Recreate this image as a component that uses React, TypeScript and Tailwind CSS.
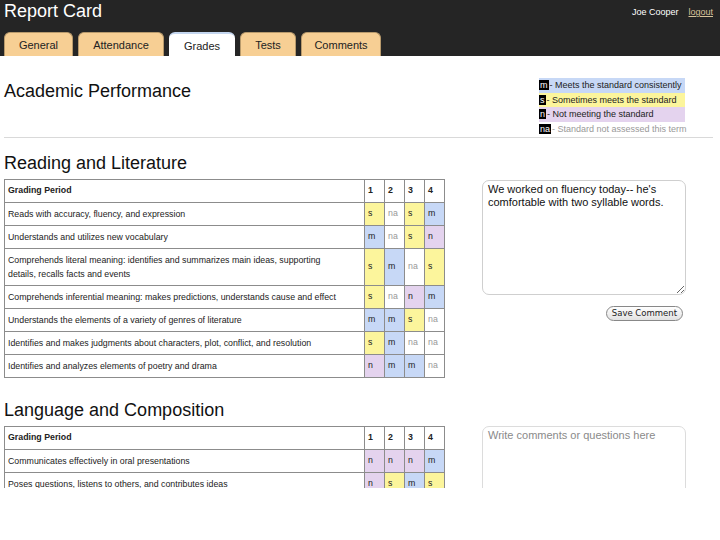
type Mark = 's' | 'm' | 'n' | 'na';

const readingRows: { label: string; marks: Mark[] }[] = [
  { label: 'Reads with accuracy, fluency, and expression', marks: ['s', 'na', 's', 'm'] },
  { label: 'Understands and utilizes new vocabulary', marks: ['m', 'na', 's', 'n'] },
  {
    label: 'Comprehends literal meaning: identifies and summarizes main ideas, supporting details, recalls facts and events',
    marks: ['s', 'm', 'na', 's'],
  },
  { label: 'Comprehends inferential meaning: makes predictions, understands cause and effect', marks: ['s', 'na', 'n', 'm'] },
  { label: 'Understands the elements of a variety of genres of literature', marks: ['m', 'm', 's', 'na'] },
  { label: 'Identifies and makes judgments about characters, plot, conflict, and resolution', marks: ['s', 'm', 'na', 'na'] },
  { label: 'Identifies and analyzes elements of poetry and drama', marks: ['n', 'm', 'm', 'na'] },
];

const languageRows: { label: string; marks: Mark[] }[] = [
  { label: 'Communicates effectively in oral presentations', marks: ['n', 'n', 'n', 'm'] },
  { label: 'Poses questions, listens to others, and contributes ideas', marks: ['n', 's', 'm', 's'] },
  { label: 'Uses appropriate vocabulary and grammar when speaking', marks: ['m', 's', 'm', 'm'] },
];

const markClass: Record<Mark, string> = {
  s: 'bg-[#fcf59c] text-[#222]',
  m: 'bg-[#c7d8f6] text-[#222]',
  n: 'bg-[#e4d3ee] text-[#222]',
  na: 'bg-white text-[#999]',
};

const tabs = [
  { name: 'General', w: 'w-[69px]' },
  { name: 'Attendance', w: 'w-[86px]' },
  { name: 'Grades', w: 'w-[66px]', active: true },
  { name: 'Tests', w: 'w-[56px]' },
  { name: 'Comments', w: 'w-[80px]' },
];

function GradeTable({ rows }: { rows: { label: string; marks: Mark[] }[] }) {
  return (
    <table className="w-[441px] border-collapse border border-[#8c8c8c] text-[8.8px] text-[#222] shrink-0">
      <thead>
        <tr className="h-[23px]">
          <th className="border border-[#8c8c8c] text-left font-bold pl-[3px]">Grading Period</th>
          {[1, 2, 3, 4].map((n) => (
            <th key={n} className="w-[20px] border border-[#8c8c8c] text-left font-bold pl-[3px]">
              {n}
            </th>
          ))}
        </tr>
      </thead>
      <tbody>
        {rows.map((row) => (
          <tr key={row.label} className="h-[23px]">
            <td className="border border-[#8c8c8c] pl-[3px] pr-[21px] py-[4px] leading-[14px]">{row.label}</td>
            {row.marks.map((m, i) => (
              <td key={i} className={`border border-[#8c8c8c] pl-[3px] ${markClass[m]}`}>
                {m}
              </td>
            ))}
          </tr>
        ))}
      </tbody>
    </table>
  );
}

export default function App() {
  return (
    <div className="w-[720px] h-[540px] bg-white font-['Liberation_Sans',Arial,sans-serif] overflow-hidden">
      {/* Header */}
      <header className="h-14 bg-[#252525] flex flex-col">
        <div className="h-8 flex justify-between items-start">
          <h1 className="pl-1 text-[18px] leading-[23px] text-white">Report Card</h1>
          <div className="flex gap-[10px] pt-[6px] pr-[7px] text-[9px] text-white">
            <span>Joe Cooper</span>
            <a className="underline text-[#d8c39a]">logout</a>
          </div>
        </div>
        <nav className="h-6 flex gap-[5px] pl-1">
          {tabs.map((t) => (
            <div
              key={t.name}
              className={`${t.w} h-6 rounded-t-[6px] flex items-center justify-center text-[11px] pt-[2px] ${
                t.active
                  ? 'bg-white border-t-2 border-[#c4d6ef] text-[#222]'
                  : 'bg-[#f7cf94] border border-b-0 border-[#b89a6c] text-[#222]'
              }`}
            >
              {t.name}
            </div>
          ))}
        </nav>
      </header>

      <main className="h-[432px] overflow-hidden">
        {/* Academic Performance */}
        <div className="flex justify-between items-start pt-[22px] pl-1 pr-[35px]">
          <h2 className="text-[18px] leading-[23px] text-[#111] mt-[2px]">Academic Performance</h2>
          <ul className="w-[146px] text-[9px] leading-[14.5px] whitespace-nowrap">
            <li className="bg-[#c7d8f6] text-[#222] flex items-center">
              <span className="bg-black text-white px-[1px] leading-[10px] mr-[1px]">m</span>- Meets the standard consistently
            </li>
            <li className="bg-[#fcf59c] text-[#222] flex items-center">
              <span className="bg-black text-white px-[1px] leading-[10px] mr-[1px]">s</span>- Sometimes meets the standard
            </li>
            <li className="bg-[#e4d3ee] text-[#222] flex items-center">
              <span className="bg-black text-white px-[1px] leading-[10px] mr-[1px]">n</span>- Not meeting the standard
            </li>
            <li className="text-[#999] flex items-center">
              <span className="bg-black text-white px-[1px] leading-[10px] mr-[1px]">na</span>- Standard not assessed this term
            </li>
          </ul>
        </div>
        <div className="mt-[1px] ml-1 mr-[7px] border-t border-[#d9d9d9]" />

        {/* Reading and Literature */}
        <h2 className="pl-1 mt-[14px] mb-[4px] text-[18px] leading-[23px] text-[#111]">Reading and Literature</h2>
        <div className="flex items-start pl-1">
          <GradeTable rows={readingRows} />
          <div className="ml-[37px] mt-[1px] flex flex-col items-end w-[204px]">
            <textarea
              readOnly
              defaultValue="We worked on fluency today-- he's comfortable with two syllable words."
              className="w-[204px] h-[115px] rounded-[7px] border border-[#cfcfcf] px-[5px] py-[2px] text-[11px] leading-[13px] text-[#111] outline-none"
            />
            <button className="mt-[11px] mr-[3px] h-[15px] px-[5px] rounded-full border border-[#888] bg-gradient-to-b from-white to-[#e2e2e2] text-[8.5px] leading-[13px] text-[#222] font-['DejaVu_Sans',sans-serif]">
              Save Comment
            </button>
          </div>
        </div>

        {/* Language and Composition */}
        <h2 className="pl-1 mt-[21px] mb-[4px] text-[18px] leading-[23px] text-[#111]">Language and Composition</h2>
        <div className="flex items-start pl-1">
          <GradeTable rows={languageRows} />
          <div className="ml-[37px] flex flex-col w-[204px]">
            <textarea
              readOnly
              placeholder="Write comments or questions here"
              className="w-[204px] h-[115px] rounded-[7px] border border-[#dcdcdc] px-[5px] py-[2px] text-[11px] leading-[13px] placeholder:text-[#8a8a8a] outline-none"
            />
          </div>
        </div>
      </main>
    </div>
  );
}
